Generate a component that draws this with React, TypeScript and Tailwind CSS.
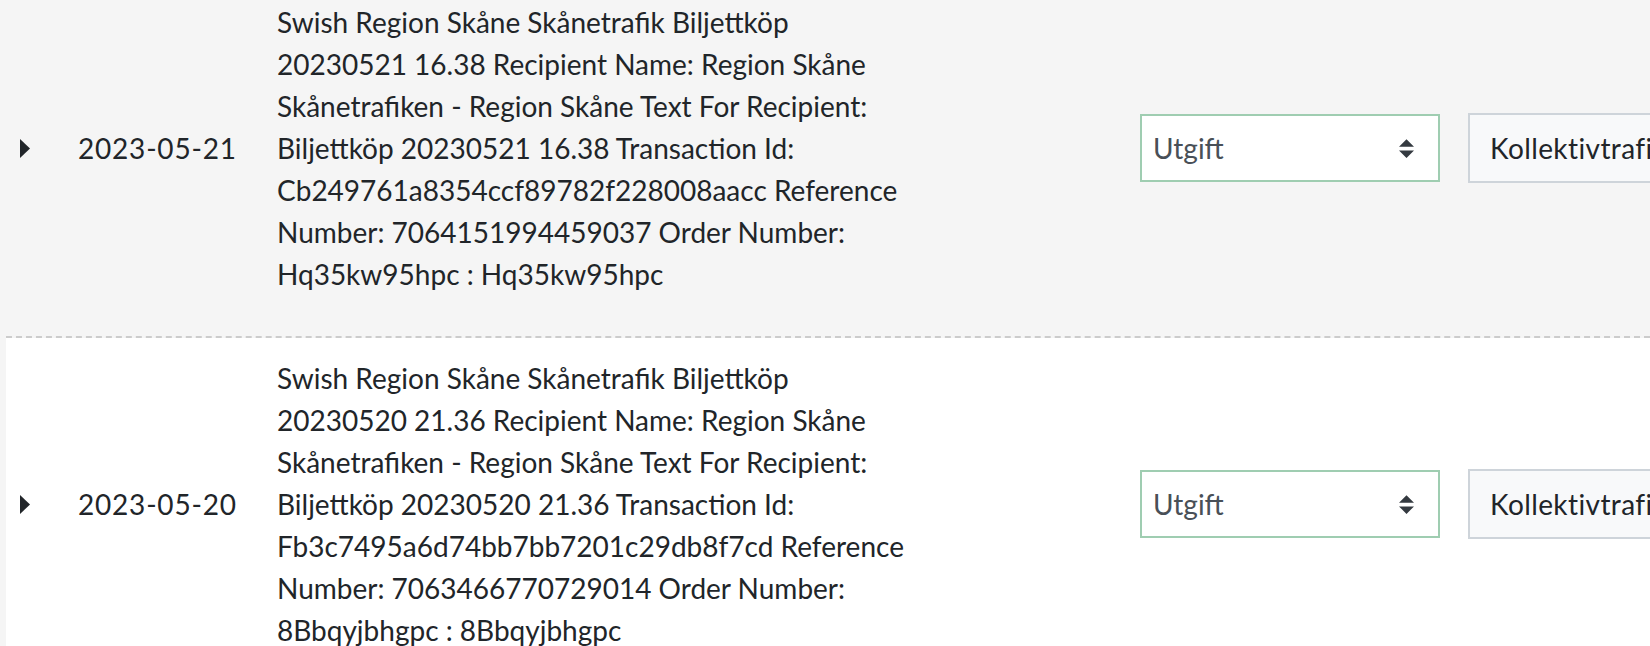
const transactions = [
  {
    date: '2023-05-21',
    bg: 'bg-[#f5f5f5]',
    lines: [
      'Swish Region Skåne Skånetrafik Biljettköp',
      '20230521 16.38 Recipient Name: Region Skåne',
      'Skånetrafiken - Region Skåne Text For Recipient:',
      'Biljettköp 20230521 16.38 Transaction Id:',
      'Cb249761a8354ccf89782f228008aacc Reference',
      'Number: 7064151994459037 Order Number:',
      'Hq35kw95hpc : Hq35kw95hpc',
    ],
  },
  {
    date: '2023-05-20',
    bg: 'bg-white',
    lines: [
      'Swish Region Skåne Skånetrafik Biljettköp',
      '20230520 21.36 Recipient Name: Region Skåne',
      'Skånetrafiken - Region Skåne Text For Recipient:',
      'Biljettköp 20230520 21.36 Transaction Id:',
      'Fb3c7495a6d74bb7bb7201c29db8f7cd Reference',
      'Number: 7063466770729014 Order Number:',
      '8Bbqyjbhgpc : 8Bbqyjbhgpc',
    ],
  },
]

function Caret() {
  return (
    <svg width="10" height="19" viewBox="0 0 10 19" className="block">
      <polygon points="0,0 10,9.5 0,19" fill="#212529" />
    </svg>
  )
}

function SelectArrows() {
  return (
    <svg width="15" height="19" viewBox="0 0 4 5" className="block">
      <path d="M2 0L0 2h4zm0 5L0 3h4z" fill="#343a40" />
    </svg>
  )
}

export default function App() {
  return (
    <div className="h-[646px] overflow-hidden bg-[#f5f5f5] pl-[6px] font-['Lato',sans-serif] text-[28px] leading-[42px] text-[#212529]">
      <div className="mt-[-18px]">
        {transactions.map((t, i) => (
          <div
            key={t.date}
            className={`flex items-center pl-[14px] pt-[19px] pb-[41px] ${t.bg} ${
              i === 0 ? 'border-b-2 border-dashed border-[#cccccc]' : ''
            }`}
          >
            {/* expand toggle */}
            <div className="w-[10px] shrink-0">
              <Caret />
            </div>
            <div className="ml-[48px] w-[199px] shrink-0 whitespace-nowrap tracking-[0.8px]">{t.date}</div>
            <div className="w-[863px] shrink-0">
              {t.lines.map((l, j) => (
                <div key={j} className="whitespace-nowrap">{l}</div>
              ))}
            </div>

            {/* type select */}
            <div className="flex h-[68px] w-[300px] shrink-0 items-center justify-between border-2 border-[#9fcdb1] bg-white pl-[11px] pr-[24px] text-[#495057]">
              <span>Utgift</span>
              <SelectArrows />
            </div>

            {/* category */}
            <div className="ml-[28px] flex h-[70px] w-[320px] shrink-0 items-center border-2 border-[#ced4da] bg-[#f8f9fa] pl-[20px] whitespace-nowrap tracking-[0.4px]">
              Kollektivtrafik
            </div>
          </div>
        ))}
      </div>
    </div>
  )
}
